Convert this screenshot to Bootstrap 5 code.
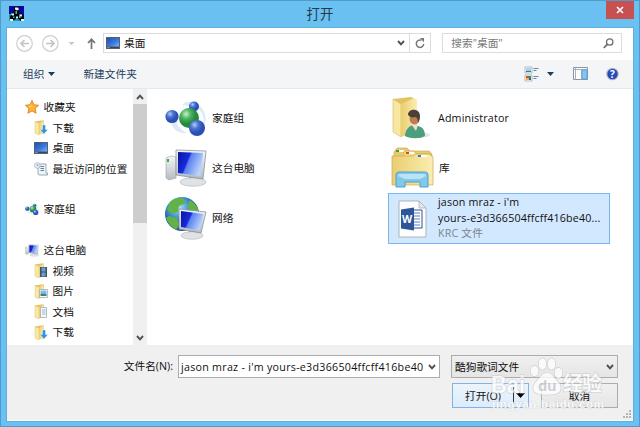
<!DOCTYPE html>
<html lang="zh-CN">
<head>
<meta charset="utf-8">
<meta name="viewport" content="width=device-width, initial-scale=1">
<title>打开</title>
<link rel="stylesheet" href="https://cdn.jsdelivr.net/npm/bootstrap@5.3.0/dist/css/bootstrap.min.css">
<style>
html,body{height:100%}
body{font:10.7px/14px "Open Sans","Noto Sans CJK SC",sans-serif;color:#111;overflow:hidden}
svg{display:block;flex:none}
.win{width:640px;height:427px;background:#69c0f1;border:1px solid #4f9bc9;padding:0 6px 6px}
.titlebar{height:27px;font-size:13.4px;line-height:26px;color:#243b4a}
.closebtn{right:-1px;top:0;width:28px;height:18px;background:#c75050;border:0;padding:0}
.appicon{left:2px;top:5px}
.pane{height:393px;outline:1px solid #5fb0dd}
.nav-row{height:32px;padding:5px 11px 0 9px}
.addr{width:329px;height:20px;border:1px solid #dcdcdc;padding-left:2px}
.addr .refresh{width:21px;height:18px;border-left:1px solid #dcdcdc}
.find{width:180px;height:20px;border:1px solid #dcdcdc;margin-left:11px;padding:0 7px 0 8px;color:#777}
.tools{height:29px;background:#f4f5f7;border-bottom:1px solid #e6e8ea;padding:0 13px 0 16px;color:#24405f}
.tools .newdir{margin-left:27px}
.main{height:256px}
.side{width:126px;padding-top:8px}
.side div{height:20.45px;padding-left:18px;gap:4.5px;white-space:nowrap}
.side .sub{padding-left:27px}
.side .gap-row{margin-top:20.45px}
.sbar{width:14px;background:#f0f0f0}
.sbar .up{margin:5px 0 4px;transform:scaleY(-1)}
.thumb{height:119px;background:#cdcdcd}
.files{grid-template-columns:222px 222px;grid-auto-rows:50px;column-gap:4px;padding:4px 0 0 15px;align-content:start}
.files>div{gap:5px;height:49px;padding-left:3px}
.files .picked{background:#d1e8ff;border:1px solid #79b7ee;height:51px;gap:7px;line-height:15.5px}
.files .type{color:#7c858d}
.foot{height:75px;background:#f0f0f0}
.name-row{padding:10px 15px 0 0;height:36px}
.name-row label{line-height:22px;margin-right:5px}
.fld{height:23px;border:1px solid #abadb3;background:#fff;width:262px;padding:0 3px 0 2px}
.kind{width:167px;height:23px;border:1px solid #acacac;background:linear-gradient(#f0f0f0,#e5e5e5);margin-left:11px;padding:0 3px 0 3px}
.act-row{padding:2px 15px 0 0}
.act{height:25px;border:1px solid #acacac;background:linear-gradient(#f0f0f0,#e6e6e6)}
.go{width:77px;border-color:#7eb4ea;background:linear-gradient(#ecf4fc,#dcecfc)}
.go i{width:15px;height:17px;border-left:1px solid #333}
.stop{width:77px;margin-left:12px}
.wm{left:484px;top:350px;pointer-events:none;paint-order:stroke}
.grip{right:2px;bottom:2px}
.l1{letter-spacing:.16px}
.l2{letter-spacing:.27px}
</style>
</head>
<body>
<svg width="0" height="0" class="position-absolute">
<defs>
<linearGradient id="fo" x1="0" x2="1"><stop offset="0" stop-color="#e9cd70"/><stop offset="1" stop-color="#fbeeb2"/></linearGradient>
<linearGradient id="scr" x1="0" x2="1" y2=".4"><stop offset="0" stop-color="#0713a8"/><stop offset=".45" stop-color="#1a2cd8"/><stop offset=".5" stop-color="#5a80f0"/><stop offset="1" stop-color="#b9d2fb"/></linearGradient>
<linearGradient id="dk" x1="0" x2="1" y2="1"><stop offset="0" stop-color="#1f4fae"/><stop offset=".6" stop-color="#3f7be0"/><stop offset="1" stop-color="#7fb2f2"/></linearGradient>
<linearGradient id="gy" y2="1" x2="0"><stop offset="0" stop-color="#f4f6f7"/><stop offset="1" stop-color="#b4bbc0"/></linearGradient>
<radialGradient id="bb" cx=".35" cy=".3"><stop offset="0" stop-color="#b4ccf6"/><stop offset=".5" stop-color="#4a74d2"/><stop offset="1" stop-color="#2b50b4"/></radialGradient>
<radialGradient id="gb" cx=".35" cy=".3"><stop offset="0" stop-color="#c9f2c4"/><stop offset=".5" stop-color="#4bb160"/><stop offset="1" stop-color="#25883f"/></radialGradient>
<radialGradient id="gl" cx=".4" cy=".3"><stop offset="0" stop-color="#b6e4fa"/><stop offset=".6" stop-color="#3f93d8"/><stop offset="1" stop-color="#24589f"/></radialGradient>
<symbol id="desk" viewBox="0 0 14 12"><path d="M0 0h14v12H0z" fill="#536274"/><path d="M1 1h12v8.4H1z" fill="url(#dk)"/><path d="M1 10h12v1H1z" fill="#39475a"/><path d="M1.5 10.2h2v.8h-2z" fill="#9bd"/></symbol>
<symbol id="fold" viewBox="0 0 14 15"><path d="M1 1.5 7 .5h3V14H3L1 12.5z" fill="#e3c365"/><path d="m1 1.5 4 1.8V15l-4-2z" fill="#fae9a4" stroke="#d7b85c" stroke-width=".4"/><path d="M5 3.3 9.5 1v12.6L5 14.500z" fill="url(#fo)"/></symbol>
<symbol id="home" viewBox="0 0 42 36"><path d="M5 20C7 28 12 34 22 33 14 29 11 24 11 18M17 5C21 0 31 1 35 6c4 4 8 12 4 20 1-11-4-17-9-19" fill="#cfe3f5" opacity=".75"/><circle cx="29" cy="6.500" r="5" fill="url(#bb)"/><circle cx="7" cy="16.500" r="6.600" fill="url(#bb)"/><circle cx="24" cy="18" r="10" fill="url(#gb)"/><circle cx="32" cy="28" r="8" fill="url(#bb)"/></symbol>
<symbol id="pc" viewBox="0 0 42 38"><path d="m1 9 5-2 5 1v21l-7 2-3-2z" fill="url(#gy)" stroke="#9ba2a6" stroke-width=".6"/><path d="M2 10v3h2v-3z" fill="#3fae38"/><path d="m24 27 6-1 1 5h-7z" fill="#a9b0b5"/><ellipse cx="28" cy="33" rx="13" ry="4.300" fill="#dfe3e6" stroke="#9fa6ab" stroke-width=".5"/><path d="m11 1 30 1-3 28-27-4z" fill="url(#gy)" stroke="#8c9499" stroke-width=".8"/><path d="m13 3 25 1-2.500 23L13 24z" fill="url(#scr)"/></symbol>
<symbol id="chev" viewBox="0 0 8 6"><path d="m1 1 3 3.300L7 1" fill="none" stroke="#505050" stroke-width="1.900"/></symbol>
</defs>
</svg>
<div class="win position-relative">
  <div class="titlebar text-center position-relative">打开
    <button class="closebtn position-absolute d-flex align-items-center justify-content-center" aria-label="关闭"><svg width="8" height="8" viewBox="0 0 8 8"><path d="m1 1 6 6M7 1 1 7" stroke="#fff" stroke-width="1.600"/></svg></button>
    <svg class="appicon position-absolute" width="15" height="15" viewBox="0 0 15 15"><path fill="#080898" d="M0 0h15v15H0z"/><path d="M0 8h4v7H0zm4 5h7v2H4z" fill="#0f9fa8"/><path d="M5 1h5v6l5 3v4h-4l-3-2-3 2H1v-4l4-3z" fill="#050505"/><path d="M6 1.500h3l1 2-2 1-2-1zM2 7.500h3v2H3zm8 1h3v2h-2zm-3 2h2v2H7zM1 13h3v2H1zm11 0h3v2h-3z" fill="#e4f6f4"/><path d="M6.500 5h1.500v3H6.500zM4 10.500h1.500V12H4zM10 10h1.500v2H10z" fill="#2cc5c2"/></svg>
  </div>
  <div class="pane bg-white d-flex flex-column">
    <div class="nav-row d-flex align-items-start">
      <svg width="87" height="20" viewBox="16 33 87 20" fill="none"><g stroke="#cfcfcf" stroke-width="1.200"><circle cx="24.500" cy="43.500" r="7.800"/><circle cx="50.300" cy="43.500" r="7.800"/></g><path d="M29 43.500h-8m3.500-3.500L21 43.500l3.500 3.500M46 43.500h8M50.500 40l3.500 3.500-3.500 3.500" stroke="#c4c4c4" stroke-width="1.700"/><path d="M68.500 42h6l-3 3.300z" fill="#c8c8c8"/><path d="M91.500 49v-9.500M88 43l3.500-3.700L95 43" stroke="#747474" stroke-width="1.700"/></svg>
      <div class="addr d-flex align-items-center">
        <svg width="14" height="12"><use href="#desk"/></svg>
        <span class="ms-1 flex-grow-1">桌面</span>
        <svg width="8" height="6" class="me-1"><use href="#chev"/></svg>
        <div class="refresh d-flex align-items-center justify-content-center"><svg width="10" height="11" viewBox="0 0 10 11"><path d="M6.500 2.300A3.700 3.700 0 1 0 8.700 6" fill="none" stroke="#777" stroke-width="1.500"/><path d="M5 0h4v4.200z" fill="#777"/></svg></div>
      </div>
      <div class="find d-flex align-items-center justify-content-between"><span>搜索"桌面"</span><svg width="11" height="11" viewBox="0 0 11 11" fill="none" stroke="#6c6c6c"><circle cx="6.700" cy="4" r="3.200" stroke-width="1.300"/><path d="M4.300 6.300.8 10" stroke-width="1.800"/></svg></div>
    </div>
    <div class="tools d-flex align-items-center">
      <span>组织</span><svg class="ms-1" width="8" height="5"><path d="M0 0h7L3.500 4z" fill="#1e3c5c"/></svg>
      <span class="newdir">新建文件夹</span>
      <svg class="ms-auto" width="97" height="18" viewBox="523 65 97 18"><g fill="#f8fafc" stroke="#9aa5b0" stroke-width=".7"><path d="M525 67h7v6h-7zM525 75h7v6h-7z"/></g><path d="M526 70.500h5v1.500h-5z" fill="#268b7b"/><path d="M526 68h5v2.500h-5z" fill="#a8d6f4"/><path d="M526 76h2v2h-2z" fill="#d44"/><path d="M528 76h3v2h-3z" fill="#3d9448"/><path d="M526 78h3v2h-3z" fill="#ebba2f"/><path d="M529 78h2v2h-2z" fill="#3557c2"/><path d="M533.500 68.500h5m-5 2h3m-3 6h5m-5 2h3" stroke="#72859b"/><path d="M547 72h7l-3.500 4z" fill="#1e3c5c"/><path d="M573.500 67.500h14v12h-14z" fill="#fff" stroke="#8795a5"/><path d="M573.500 69.500h14m-12-2v12m6-10v10" stroke="#a6b0bb"/><path d="M582 70h5v9h-5z" fill="#83c4f5" stroke="#4a99da" stroke-width=".6"/><circle cx="612.500" cy="74" r="6.300" fill="#b9bec8"/><circle cx="612.500" cy="74" r="5.200" fill="#254bb8"/><text x="612.500" y="77.600" text-anchor="middle" font-size="10" font-weight="700" fill="#fff">?</text></svg>
    </div>
    <div class="main d-flex">
      <div class="side d-flex flex-column">
        <div class="d-flex align-items-center"><svg width="14" height="14" viewBox="0 0 14 14"><path d="m7 .5 1.900 4.300 4.700.5-3.500 3.200 1 4.700L7 10.900l-4.100 2.300 1-4.700L.4 5.300l4.700-.5z" fill="#fcb63c" stroke="#e57a1f" stroke-width=".9"/><path d="M7 3 5.800 6 3 6.300l3 1z" fill="#ffe59a"/></svg><span>收藏夹</span></div>
        <div class="sub d-flex align-items-center"><svg width="14" height="15"><use href="#fold"/><path d="M8.500 5h3v4.500H14L10 14 6 9.500h2.500z" fill="#2f92dc" stroke="#fff" stroke-width=".4"/></svg><span>下载</span></div>
        <div class="sub d-flex align-items-center"><svg width="14" height="12"><use href="#desk"/></svg><span>桌面</span></div>
        <div class="sub d-flex align-items-center"><svg width="14" height="14" viewBox="0 0 14 14"><path d="M4 2h8v9h1.500v2H5L4 12z" fill="#eef3f6" stroke="#8995a0" stroke-width=".8"/><path d="M6.500 4.500H10m-3.500 2H10m-3.500 2H10" stroke="#5186b5"/><circle cx="3.300" cy="3.500" r="2.800" fill="#edf2f5" stroke="#9aa7b2" stroke-width=".7"/><path d="M3.300 2v1.700h1.200" fill="none" stroke="#668" stroke-width=".6"/></svg><span>最近访问的位置</span></div>
        <div class="gap-row d-flex align-items-center"><svg width="14" height="13" viewBox="0 0 42 38"><use href="#home" width="42" height="36"/></svg><span>家庭组</span></div>
        <div class="gap-row d-flex align-items-center"><svg width="14" height="13" viewBox="0 0 42 38"><use href="#pc" width="42" height="38"/></svg><span>这台电脑</span></div>
        <div class="sub d-flex align-items-center"><svg width="14" height="15"><use href="#fold"/><path d="M6 4h7v10H6z" fill="#46525e"/><path d="M7.500 4.500h4v4h-4zm0 5h4v4h-4z" fill="#5fa3d4"/></svg><span>视频</span></div>
        <div class="sub d-flex align-items-center"><svg width="14" height="15"><use href="#fold"/><path d="M5.500 5.500h8v8h-8z" fill="#fff" stroke="#9aa5ad" stroke-width=".7"/><path d="M6.500 6.500h6v3h-6z" fill="#79bfea"/><path d="M6.500 9.500h6v2.500h-6z" fill="#3d8183"/></svg><span>图片</span></div>
        <div class="sub d-flex align-items-center"><svg width="14" height="15"><use href="#fold"/><path d="M6.500 3.500h6v10h-6z" fill="#f4f8fb" stroke="#9aa5ad" stroke-width=".7"/><path d="M8 6h3.500M8 8h3.500M8 10h3.500" stroke="#80a9cc" stroke-width=".8"/></svg><span>文档</span></div>
        <div class="sub d-flex align-items-center"><svg width="14" height="15"><use href="#fold"/><path d="M8.500 5h3v4.500H14L10 14 6 9.500h2.500z" fill="#2f92dc" stroke="#fff" stroke-width=".4"/></svg><span>下载</span></div>
      </div>
      <div class="sbar d-flex flex-column align-items-center">
        <svg width="8" height="6" class="up"><use href="#chev"/></svg>
        <div class="thumb w-100"></div>
        <svg width="8" height="6" class="mt-auto mb-1"><use href="#chev"/></svg>
      </div>
      <div class="files d-grid">
        <div class="d-flex align-items-center"><svg width="42" height="36"><use href="#home"/></svg><span>家庭组</span></div>
        <div class="d-flex align-items-center"><svg width="42" height="44" viewBox="0 0 42 44"><ellipse cx="26" cy="39" rx="13" ry="3" fill="#e6e6e6"/><path d="M2 3 20 1l6 3v33H9l-7-3z" fill="#e2c262"/><path d="m2 3 8 5v33l-8-5z" fill="#f8e7a0" stroke="#d5b85c" stroke-width=".6"/><path d="m10 8 13-6 3 2v31l-16 6z" fill="url(#fo)"/><path d="M14 40c0-6 4-10 8-11l5 1c5 1 7 5 7 10-5 3-14 3-20 0z" fill="#4b9f7f"/><path d="m20 28 5 7 2-6-1-4h-4z" fill="#f1dfca"/><ellipse cx="23.500" cy="22.500" rx="5" ry="6" fill="#bd7d54"/><path d="M17 19c0-7 12-7 12 1 0 3-1 5-2 7 0-4-1-6-3-6-3 1-5 0-7-2z" fill="#4b4038"/></svg><span class="l1">Administrator</span></div>
        <div class="d-flex align-items-center"><svg width="42" height="38"><use href="#pc"/></svg><span>这台电脑</span></div>
        <div class="d-flex align-items-center"><svg width="43" height="42" viewBox="0 0 43 42"><path d="m3 5 3-4h10l3 3h19l3 3v27H3z" fill="#e8ca70" stroke="#c7a445" stroke-width=".6"/><path d="M5 3h8v2H5z" fill="#fff"/><path d="M5 3h3v2H5z" fill="#38a143"/><path d="M13 8V4h10l3 3h14v5H13z" fill="#f5dc8c" stroke="#c7a445" stroke-width=".5"/><path d="M15 5h8v2h-8z" fill="#fff"/><path d="M15 5h3v2h-3z" fill="#df4a21"/><path d="M1 9h21l3-2h13l4 3v28H1z" fill="url(#fo)" stroke="#cfaa4e" stroke-width=".7"/><path d="M27 8h9v2h-9z" fill="#fff"/><path d="M27 8h3v2h-3z" fill="#2a82cc"/><path d="M5 40V28q0-3 3-3h26q3 0 3 3v12h-8v-5H14v5z" fill="#82c8ea" stroke="#49a0d2"/><path d="M7 29q0-2 3-2h22q3 0 3 2l-6 3H14z" fill="#d1eefa" opacity=".7"/></svg><span>库</span></div>
        <div class="d-flex align-items-center"><svg width="42" height="44" viewBox="0 0 42 44"><circle cx="17" cy="18" r="17" fill="url(#gl)"/><path d="M5 6q6-5 13-4l3 5-7 3-1 6-6 2-5-4zM25 4q8 5 9 13l-7-1-5-5zM4 20l8 2 2 7-3 5Q3 29 1 22z" fill="#62b347"/><path d="m24 34 6 1v5h-7z" fill="#a6adb2"/><ellipse cx="27" cy="39.500" rx="11" ry="3.800" fill="#dfe3e6" stroke="#a4abb0" stroke-width=".5"/><path d="m14 13 27 3-5 21-22-4z" fill="url(#gy)" stroke="#8c9499" stroke-width=".8"/><path d="m16 15 22.500 3-4 16.500L16 31z" fill="url(#scr)"/></svg><span>网络</span></div>
        <div class="picked d-flex align-items-center"><svg width="39" height="40" viewBox="0 0 39 40"><path d="M7 2h20l7 7v29H7z" fill="#fdfdfd" stroke="#a7adb3" stroke-width=".9"/><path d="M27 2v7h7z" fill="#e3e7ea" stroke="#a7adb3" stroke-width=".7"/><path d="M20 11h10v18H20z" fill="#fff" stroke="#2b579a"/><path d="M22 14h6m-6 3h6m-6 3h6m-6 3h6m-6 3h6" stroke="#5a80bb"/><path d="m9 10.500 13-2v23l-13-2z" fill="#2b579a"/><text x="15.200" y="24" text-anchor="middle" fill="#fff" font-size="10.500" font-weight="700">W</text></svg><span class="l1 text-nowrap">jason mraz - i'm<br>yours-e3d366504ffcff416be40...<br><span class="type">KRC 文件</span></span></div>
      </div>
    </div>
    <div class="foot position-relative">
      <div class="name-row d-flex justify-content-end">
        <label>文件名(N):</label>
        <div class="fld d-flex align-items-center justify-content-between"><span class="l2 text-nowrap">jason mraz - i'm yours-e3d366504ffcff416be40</span><svg width="8" height="6"><use href="#chev"/></svg></div>
        <div class="kind d-flex align-items-center justify-content-between"><span>酷狗歌词文件</span><svg width="8" height="6"><use href="#chev"/></svg></div>
      </div>
      <div class="act-row d-flex justify-content-end">
        <div class="act go d-flex align-items-center"><span class="flex-grow-1 text-center">打开(O)</span><i class="d-flex align-items-center justify-content-center"><svg width="10" height="5"><path d="M0 0h9L4.500 5z" fill="#000"/></svg></i></div>
        <div class="act stop d-flex align-items-center justify-content-center">取消</div>
      </div>
      <svg class="grip position-absolute" width="8" height="8" fill="#b5b5b5"><path d="M6 0h2v2H6zM3 3h2v2H3zm3 0h2v2H6zM0 6h2v2H0zm3 0h2v2H3zm3 0h2v2H6z"/></svg>
    </div>
  </div>
  <svg class="wm position-absolute" width="125" height="66" viewBox="485 351 125 66" fill="#fff" stroke="#c4c6c8" stroke-width="1.200" opacity=".78" font-family="Liberation Sans,Noto Sans CJK SC,sans-serif"><ellipse cx="534.500" cy="371" rx="3.800" ry="5.300"/><ellipse cx="542.500" cy="364" rx="3.800" ry="5.800"/><ellipse cx="551.500" cy="364" rx="3.800" ry="5.800"/><ellipse cx="558.500" cy="373" rx="3.800" ry="5.300"/><path d="M547 373c5 0 7 5 11 9s4 11-3 12c-5 1-11 1-16 0-7-1-7-8-3-12s6-9 11-9z"/><text x="491" y="393" font-size="23" font-weight="700" textLength="34" lengthAdjust="spacingAndGlyphs">Bai</text><text x="538" y="391" font-size="15" font-weight="700" fill="#c4c8cc" stroke="none">du</text><text x="563" y="391" font-size="20" font-weight="700" textLength="39">经验</text><text x="492" y="407.500" font-size="11.500" font-weight="700" textLength="112" stroke-width=".7">jingyan.baidu.com</text></svg>
</div>
<script src="https://cdn.jsdelivr.net/npm/bootstrap@5.3.0/dist/js/bootstrap.bundle.min.js"></script>
</body>
</html>
